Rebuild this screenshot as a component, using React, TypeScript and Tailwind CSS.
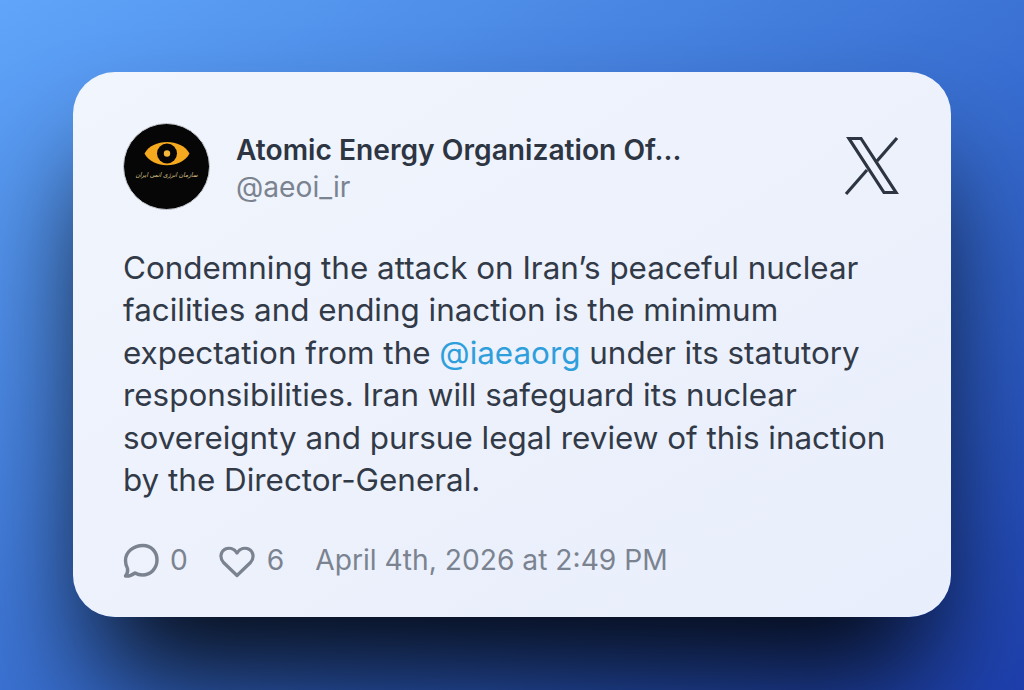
export default function App() {
  return (
    <div className="w-[1024px] h-[690px] overflow-hidden flex items-start justify-center pt-[72px] bg-gradient-to-br from-[#60a5fa] to-[#1e40af] font-['Inter',sans-serif]">
      <div className="w-[878px] h-[545px] rounded-[42px] bg-gradient-to-br from-[#f1f5fd] to-[#e8eefb] shadow-[0_80px_120px_-20px_rgba(0,0,0,0.92)] pt-[51px] pl-[50px] pr-[51px]">
        <div className="flex items-start">
          <div className="w-[87px] h-[87px] rounded-full bg-[#060606] border border-[#c9ccd2] flex flex-col items-center shrink-0 overflow-hidden">
            <svg width="46" height="25" viewBox="0 0 46 25" className="mt-[17px] shrink-0">
              <path d="M0.5 12.5 C8 -3 38 -3 45.5 12.5 C38 28 8 28 0.5 12.5 Z" fill="#f4a91f" />
              <circle cx="23" cy="12.5" r="10" fill="#060606" />
              <circle cx="23" cy="12.5" r="3.2" fill="#f4b73a" />
            </svg>
            <div dir="rtl" className="mt-[2px] text-[6.5px] leading-[14px] whitespace-nowrap text-[#dcc38a] font-['DejaVu_Sans_Condensed','DejaVu_Sans',sans-serif] italic">سازمان انرژی اتمی ایران</div>
          </div>
          <div className="ml-[26px] mt-[9px] flex-1">
            <div className="text-[28.2px] leading-[36px] font-semibold text-[#2d3542]">Atomic Energy Organization Of...</div>
            <div className="text-[28.2px] leading-[38px] text-[#7b8390]">@aeoi_ir</div>
          </div>
          <svg width="56" height="60" viewBox="0 0 56 60" className="mt-[13px] shrink-0" fill="none" stroke="#2d3542" strokeWidth="3.2">
            <path d="M5 2.5 H17 L52 56.5 H40 Z" />
            <path d="M53 2 L33 25" />
            <path d="M23 34 L2 58" />
          </svg>
        </div>
        <p className="mt-[37px] text-[31.4px] leading-[42.4px] text-[#323a48] whitespace-nowrap">
          Condemning the attack on Iran’s peaceful nuclear<br />
          facilities and ending inaction is the minimum<br />
          expectation from the <span className="text-[#2f9fdc]">@iaeaorg</span> under its statutory<br />
          responsibilities. Iran will safeguard its nuclear<br />
          sovereignty and pursue legal review of this inaction<br />
          by the Director-General.
        </p>
        <div className="mt-[40px] flex items-center text-[28.2px] leading-[38px] text-[#7b8390]">
          <svg width="36" height="36" viewBox="0 0 36 36" fill="none" stroke="#7b8390" strokeWidth="3.4" strokeLinejoin="round" strokeLinecap="round" className="shrink-0 mt-[2px]">
            <path d="M20 2.5 C28.5 2.5 34 9 34 17 C34 25.5 27.5 32 19.5 32 C16 32 14 31.2 12 30 C8.5 32.5 5 33.5 2.5 33 C4.5 30.5 5 28 4.5 25.5 C3 23 2.5 20 2.5 17.5 C2.5 9 10.5 2.5 20 2.5 Z" />
          </svg>
          <span className="ml-[11px]">0</span>
          <svg width="36" height="32" viewBox="0 0 36 32" fill="none" stroke="#7b8390" strokeWidth="3.2" strokeLinejoin="round" className="ml-[31px] shrink-0 mt-[3px]">
            <path d="M18 29.5 L4.5 16.5 C0.5 12 1.5 6 5.5 3.5 C10 1 15 2.5 18 7 C21 2.5 26 1 30.5 3.5 C34.5 6 35.5 12 31.5 16.5 Z" />
          </svg>
          <span className="ml-[12px]">6</span>
          <span className="ml-[31px]">April 4th, 2026 at 2:49 PM</span>
        </div>
      </div>
    </div>
  );
}
